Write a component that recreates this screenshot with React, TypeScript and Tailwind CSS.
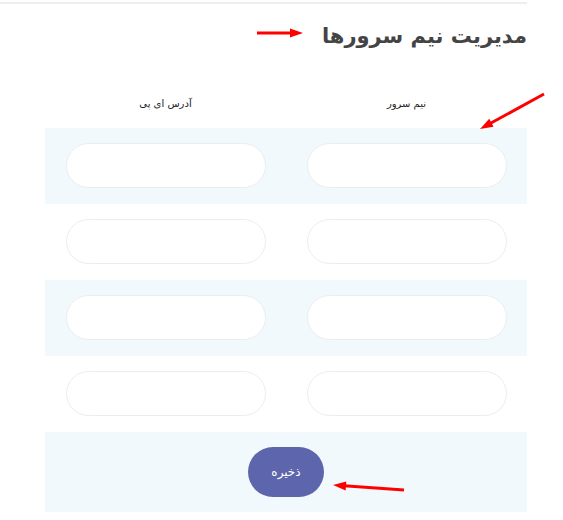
import React from "react";

function Arrow({ x1, y1, x2, y2 }: { x1: number; y1: number; x2: number; y2: number }) {
  const dx = x2 - x1;
  const dy = y2 - y1;
  const len = Math.sqrt(dx * dx + dy * dy);
  const ux = dx / len;
  const uy = dy / len;
  const hl = 13;
  const hw = 4.5;
  const bx = x2 - ux * hl;
  const by = y2 - uy * hl;
  const px = -uy;
  const py = ux;
  const pts = `${x2},${y2} ${bx + px * hw},${by + py * hw} ${bx - px * hw},${by - py * hw}`;
  return (
    <g>
      <line x1={x1} y1={y1} x2={bx + ux * 2} y2={by + uy * 2} stroke="#ff0000" strokeWidth={3} />
      <polygon points={pts} fill="#ff0000" />
    </g>
  );
}

function Field() {
  return <div className="mx-auto h-[45px] w-[200px] rounded-full border border-[#e9eff1] bg-white" />;
}

function Row({ shaded }: { shaded: boolean }) {
  return (
    <div className={`grid h-[76px] grid-cols-2 pt-[15px] ${shaded ? "bg-[#f2f9fc]" : "bg-white"}`}>
      <Field />
      <Field />
    </div>
  );
}

export default function App() {
  return (
    <div className="relative h-[520px] w-[563px] bg-white" style={{ fontFamily: '"DejaVu Sans", sans-serif' }}>
      <div className="w-[527px]">
        <div className="mt-[2px] h-[2px] bg-[#eeeeee]" />
        <h2 dir="rtl" className="mt-[12px] h-[40px] text-right text-[21px] font-bold leading-[40px] text-[#444444]">
          مدیریت نیم سرورها
        </h2>
        <div className="ml-[45px] mt-[24px]">
          <div dir="rtl" className="grid h-[48px] grid-cols-2 items-center pb-[2px] text-center text-[10px] text-[#222222]">
            <div>نیم سرور</div>
            <div>آدرس ای پی</div>
          </div>
          <Row shaded />
          <Row shaded={false} />
          <Row shaded />
          <Row shaded={false} />
          <div className="flex h-[80px] items-center justify-center bg-[#f2f9fc]">
            <button dir="rtl" className="h-[50px] w-[76px] rounded-full bg-[#5d65ad] text-[12px] text-white">
              ذخیره
            </button>
          </div>
        </div>
      </div>
      <svg className="pointer-events-none absolute left-0 top-0" width={563} height={520}>
        <Arrow x1={257} y1={31} x2={303} y2={31} />
        <Arrow x1={544} y1={92} x2={480} y2={127} />
        <Arrow x1={404} y1={488} x2={333} y2={483} />
      </svg>
    </div>
  );
}
